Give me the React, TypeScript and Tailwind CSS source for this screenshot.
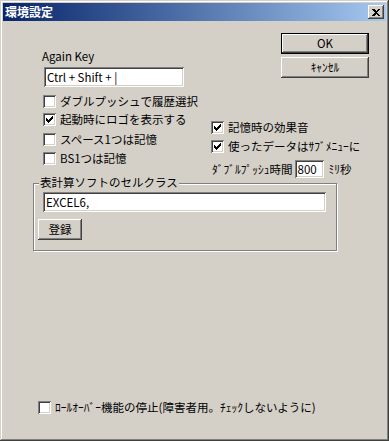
import type { ReactNode } from 'react'

const raised = 'bg-[#d4d0c8] shadow-[inset_-1px_-1px_#404040,inset_1px_1px_#fff,inset_-2px_-2px_#808080,inset_2px_2px_#d4d0c8]'
const sunken = 'bg-white shadow-[inset_1px_1px_#808080,inset_-1px_-1px_#fff,inset_2px_2px_#404040,inset_-2px_-2px_#d4d0c8]'

// classic 7x7 check glyph, one 3px column per x
const checkCols = [2, 3, 4, 3, 2, 1, 0]

function CheckBox({ checked }: { checked?: boolean }) {
  return (
    <span className={`block w-[13px] h-[13px] shrink-0 ${sunken}`}>
      {checked && (
        <svg width="13" height="13" viewBox="0 0 13 13" shapeRendering="crispEdges">
          {checkCols.map((y, i) => (
            <rect key={i} x={3 + i} y={3 + y} width="1" height="3" fill="#000" />
          ))}
        </svg>
      )}
    </span>
  )
}

function CheckRow({ checked, children, className = '' }: { checked?: boolean; children: ReactNode; className?: string }) {
  return (
    <div className={`flex items-center gap-[4px] h-[13px] ${className}`}>
      <CheckBox checked={checked} />
      <span className="whitespace-nowrap">{children}</span>
    </div>
  )
}

function Button({ children, className = '', isDefault }: { children: ReactNode; className?: string; isDefault?: boolean }) {
  if (isDefault) {
    return (
      <div className={`border border-black ${className}`}>
        <div className={`h-full flex items-center justify-center ${raised}`}>{children}</div>
      </div>
    )
  }
  return <div className={`flex items-center justify-center ${raised} ${className}`}>{children}</div>
}

export default function App() {
  return (
    <div className="w-[389px] h-[441px] bg-[#d4d0c8] p-[3px] flex flex-col text-[11.5px] leading-[13px] text-black font-['Noto_Sans_CJK_JP',sans-serif] shadow-[inset_-1px_-1px_#404040,inset_1px_1px_#d4d0c8,inset_-2px_-2px_#808080,inset_2px_2px_#fff]">
      <div className="h-[18px] flex items-center justify-between bg-linear-to-r from-[#0a246a] to-[#a6caf0] pl-[2px] pr-[2px]">
        <span className="text-white font-bold text-[12px] leading-[14px]">環境設定</span>
        <div className={`w-[16px] h-[14px] flex items-center justify-center ${raised}`}>
          <svg width="8" height="7" viewBox="0 0 8 7" shapeRendering="crispEdges">
            <path d="M0 0h2l2 2 2-2h2L5 3.5 8 7H6L4 5 2 7H0l3-3.5z" fill="#000" />
          </svg>
        </div>
      </div>

      <div className="flex-1 flex flex-col">
        <div className="flex items-start pl-[39px]">
          <div className="w-[169px] pt-[29px]">
            <div>Again Key</div>
            <div className={`mt-[4px] ml-[2px] w-[140px] h-[20px] flex items-center pl-[3px] ${sunken}`}>Ctrl + Shift + |</div>
            <CheckRow className="mt-[8px] ml-[1px]">ダブルプッシュで履歴選択</CheckRow>
            <CheckRow checked className="mt-[5px] ml-[1px]">起動時にロゴを表示する</CheckRow>
            <CheckRow className="mt-[7px] ml-[1px]">スペース1つは記憶</CheckRow>
            <CheckRow className="mt-[6px] ml-[1px]">BS1つは記憶</CheckRow>
          </div>

          <div className="pt-[12px]">
            <Button isDefault className="ml-[70px] w-[88px] h-[21px]">OK</Button>
            <Button className="mt-[3px] ml-[70px] w-[88px] h-[21px]">ｷｬﾝｾﾙ</Button>
            <CheckRow checked className="mt-[43px]">記憶時の効果音</CheckRow>
            <CheckRow checked className="mt-[6px]">使ったデータはｻﾌﾞﾒﾆｭｰに</CheckRow>
            <div className="mt-[7px] ml-[1px] flex items-center h-[18px]">
              <span className="whitespace-nowrap">ﾀﾞﾌﾞﾙﾌﾟｯｼｭ時間</span>
              <div className={`ml-[2px] w-[29px] h-[18px] flex items-center pl-[3px] ${sunken}`}>800</div>
              <span className="ml-[5px] whitespace-nowrap">ﾐﾘ秒</span>
            </div>
          </div>
        </div>

        <div className="relative mt-[5px] ml-[30px] w-[304px] h-[68px] border border-[#808080] shadow-[1px_1px_#fff,inset_1px_1px_#fff]">
          <span className="absolute -top-[8px] left-[5px] px-[1px] bg-[#d4d0c8] whitespace-nowrap">表計算ソフトのセルクラス</span>
          <div className={`mt-[8px] ml-[9px] w-[283px] h-[20px] flex items-center pl-[3px] ${sunken}`}>EXCEL6,</div>
          <Button className="mt-[7px] ml-[4px] w-[44px] h-[21px]">登録</Button>
        </div>

        <CheckRow className="mt-[150px] ml-[35px]">ﾛｰﾙｵｰﾊﾞｰ機能の停止(障害者用。ﾁｪｯｸしないように)</CheckRow>
      </div>
    </div>
  )
}
